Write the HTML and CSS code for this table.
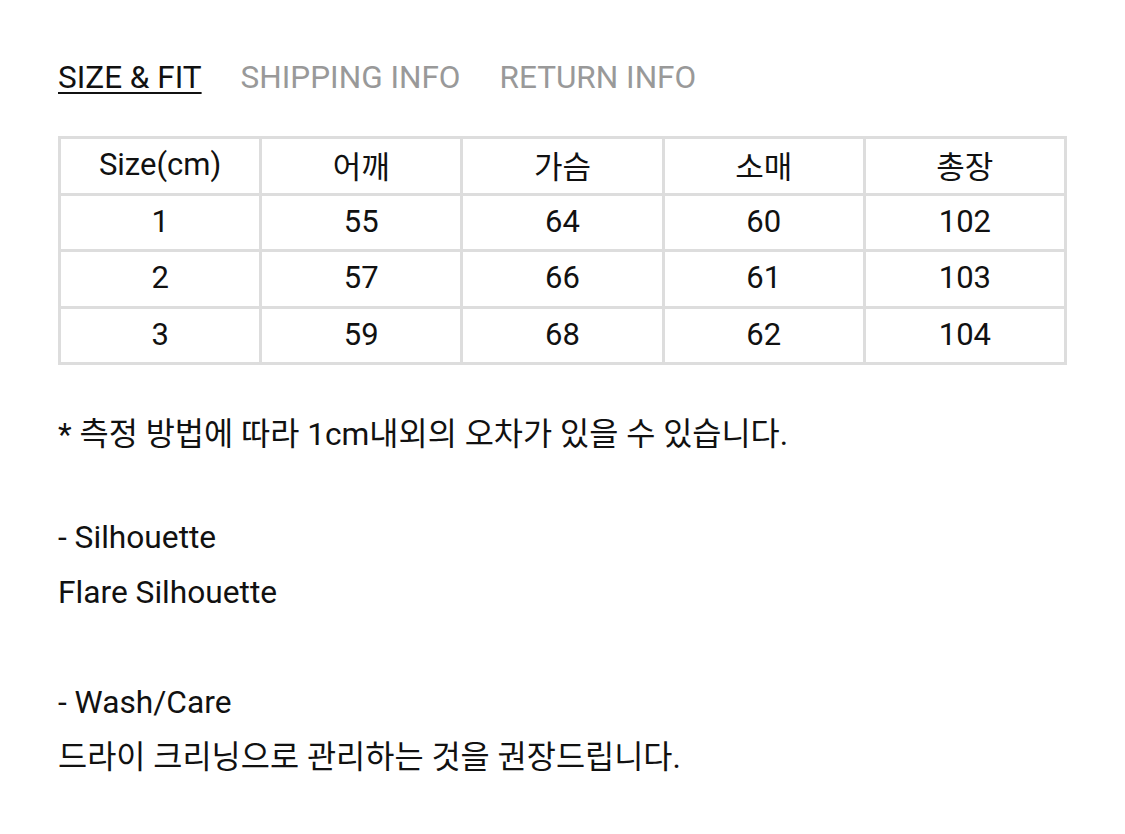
FILE: index.html
```html
<!DOCTYPE html>
<html lang="ko">
<head>
<meta charset="utf-8">
<link rel="stylesheet" href="styles.css">
</head>
<body>
<div class="page">
  <nav class="tabs">
    <span class="tab active">SIZE &amp; FIT</span>
    <span class="tab">SHIPPING INFO</span>
    <span class="tab">RETURN INFO</span>
  </nav>
  <table class="size-table">
    <tr><td>Size(cm)</td><td>어깨</td><td>가슴</td><td>소매</td><td>총장</td></tr>
    <tr><td>1</td><td>55</td><td>64</td><td>60</td><td>102</td></tr>
    <tr><td>2</td><td>57</td><td>66</td><td>61</td><td>103</td></tr>
    <tr><td>3</td><td>59</td><td>68</td><td>62</td><td>104</td></tr>
  </table>
  <p class="note">* 측정 방법에 따라 1cm내외의 오차가 있을 수 있습니다.</p>
  <div class="desc">
    <div>- Silhouette</div>
    <div>Flare Silhouette</div>
    <div class="blank">&nbsp;</div>
    <div>- Wash/Care</div>
    <div>드라이 크리닝으로 관리하는 것을 권장드립니다.</div>
  </div>
</div>
</body>
</html>
```

FILE: styles.css
```css
html, body {
  margin: 0;
  padding: 0;
  background: #fff;
}
body {
  font-family: Roboto, "Noto Sans CJK KR", sans-serif;
  color: #111;
}
.page {
  padding: 58px 58px 0 58px;
}
.tabs {
  display: flex;
  gap: 39px;
  font-size: 31.5px;
  line-height: 40px;
}
.tab {
  color: #999;
}
.tab.active {
  color: #111;
  text-decoration: underline;
  text-decoration-thickness: 2px;
  text-underline-offset: 4px;
}
.size-table {
  margin-top: 38px;
  width: 1009px;
  border-collapse: collapse;
  table-layout: fixed;
  font-size: 31px;
}
.size-table td {
  border: 3px solid #dddddd;
  height: 51px;
  padding: 0 0 2.5px 0;
  text-align: center;
  vertical-align: middle;
}
.note {
  margin: 42px 0 0 0;
  font-size: 31.7px;
  line-height: 55px;
}
.desc {
  margin-top: 48px;
  font-size: 31.7px;
  line-height: 55px;
}
```
